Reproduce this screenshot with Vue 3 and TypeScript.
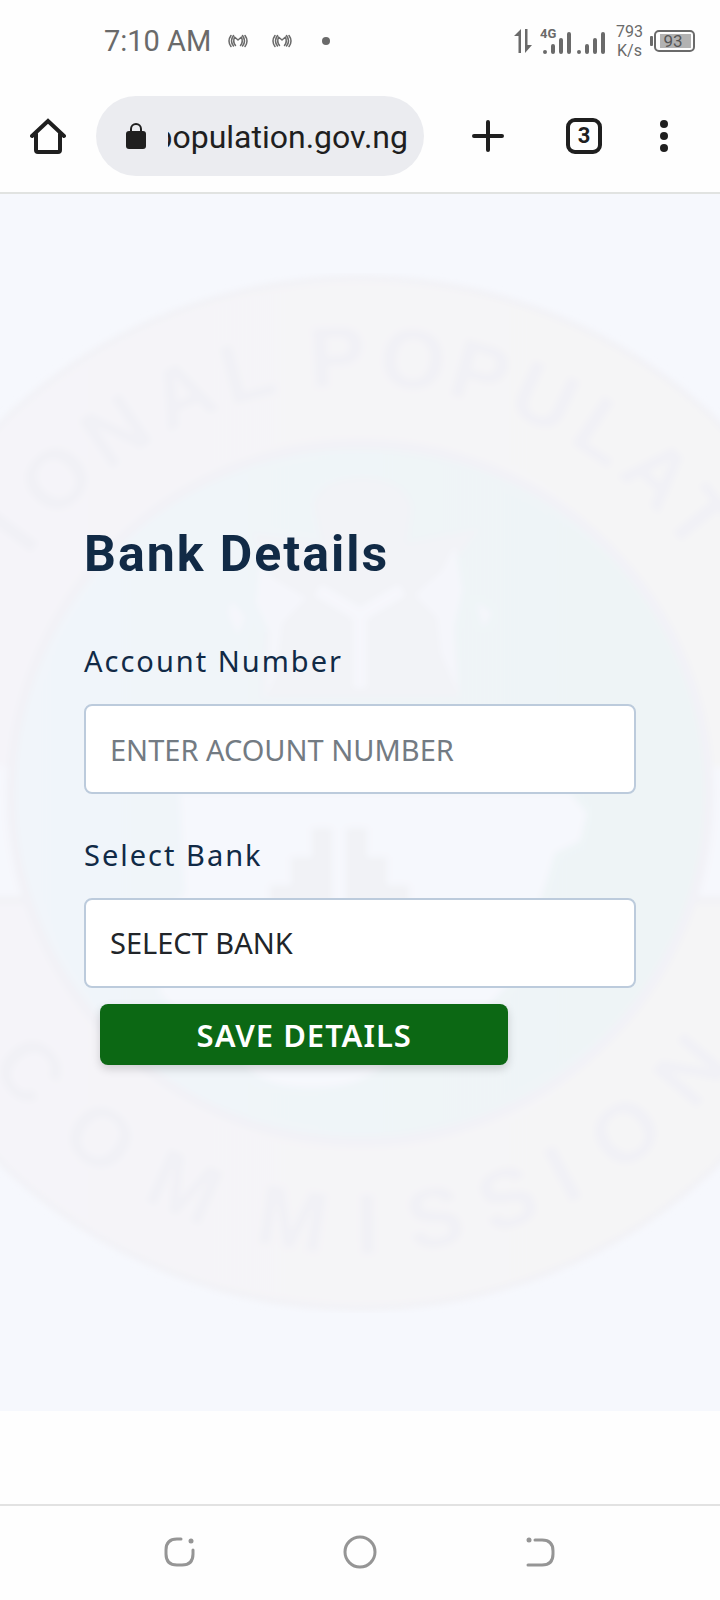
<script setup lang="ts">
import { ref } from 'vue'

interface SealLetter {
  char: string
  angle: number
}

const address = ref('population.gov.ng')
const accountNumber = ref('')
const bank = ref('')

const upperLetters: SealLetter[] = [
  { char: 'I', angle: -53 },
  { char: 'O', angle: -44 },
  { char: 'N', angle: -34 },
  { char: 'A', angle: -24 },
  { char: 'L', angle: -15 },
  { char: 'P', angle: -3 },
  { char: 'O', angle: 7 },
  { char: 'P', angle: 16 },
  { char: 'U', angle: 25 },
  { char: 'L', angle: 34 },
  { char: 'A', angle: 43 },
  { char: 'T', angle: 51 },
]

const lowerLetters: SealLetter[] = [
  { char: 'C', angle: 50 },
  { char: 'O', angle: 37 },
  { char: 'M', angle: 24 },
  { char: 'M', angle: 9 },
  { char: 'I', angle: -1 },
  { char: 'S', angle: -10 },
  { char: 'S', angle: -20 },
  { char: 'I', angle: -28 },
  { char: 'O', angle: -38 },
  { char: 'N', angle: -50 },
]
</script>

<template>
  <div class="phone">
    <header class="status">
      <div class="status-left">
        <span class="clock">7:10 AM</span>
        <svg v-for="n in 2" :key="n" class="cast" viewBox="0 0 20 14" aria-hidden="true">
          <g fill="none" stroke="#6a6a6a" stroke-width="1.500" stroke-linecap="round" stroke-linejoin="round">
            <path d="M3 1.500Q-1 7 3 12.500M5.500 1.500Q1.500 7 5.500 12M14.500 1.500Q18.500 7 14.500 12M17 1.500Q21 7 17 12.500" />
            <path d="M7.500 11.500Q4.500 8 6.500 3L10 6L13.500 3Q15.500 8 12.500 11.500" />
          </g>
        </svg>
        <span class="dot"></span>
      </div>
      <div class="status-right">
        <svg class="arrows" viewBox="0 0 18 24" aria-hidden="true">
          <path d="M7 0V24H4.500V7H0ZM11 0V24L18 16H13.500V0Z" fill="#6a6a6a" />
        </svg>
        <svg class="signal" viewBox="0 0 66 28" aria-hidden="true">
          <text x="0" y="11" class="network">4G</text>
          <g stroke="#6a6a6a" stroke-width="4" stroke-linecap="round">
            <path d="M5 25V25.100M13 19V25M21 13V25M29 7V25M39 25V25.100M47 19V25M55 13V25M63 7V25" />
          </g>
        </svg>
        <span class="speed">793<br />K/s</span>
        <svg class="battery" viewBox="0 0 46 22" aria-hidden="true">
          <rect x="0" y="6" width="3" height="10" rx="1" fill="#6a6a6a" />
          <rect x="5" y="1" width="39" height="20" rx="4" fill="none" stroke="#6a6a6a" stroke-width="2" />
          <rect x="10" y="4" width="31" height="14" fill="#b2b2b2" />
          <text x="23" y="17" class="charge">93</text>
        </svg>
      </div>
    </header>

    <div class="toolbar">
      <button class="tool home" type="button" aria-label="Home">
        <svg width="36" height="36" viewBox="0 0 36 36" fill="none" stroke="#1f1f1f" stroke-width="4" stroke-linecap="round" stroke-linejoin="round">
          <path d="M2 18L18 3L34 18" stroke-linejoin="miter" />
          <path d="M6 16V32Q6 34 8 34H28Q30 34 30 32V16" />
        </svg>
      </button>
      <div class="omnibox">
        <svg width="20" height="26" viewBox="0 0 20 26" aria-hidden="true">
          <path d="M5 10V6A5 5 0 0 1 15 6V10" fill="none" stroke="#1f1f1f" stroke-width="2" />
          <rect x="0" y="8" width="20" height="18" rx="3" fill="#1f1f1f" />
        </svg>
        <input v-model="address" class="address" type="text" aria-label="Address" />
      </div>
      <button class="tool add" type="button" aria-label="New tab">
        <svg width="32" height="32" viewBox="0 0 32 32" stroke="#1f1f1f" stroke-width="4" stroke-linecap="round">
          <path d="M2 16H30M16 2V30" />
        </svg>
      </button>
      <button class="tool tabs" type="button" aria-label="Tabs"><span class="count">3</span></button>
      <button class="tool more" type="button" aria-label="More">
        <svg width="8" height="32" viewBox="0 0 8 32" fill="#1f1f1f">
          <circle cx="4" cy="4" r="4" />
          <circle cx="4" cy="16" r="4" />
          <circle cx="4" cy="28" r="4" />
        </svg>
      </button>
    </div>

    <main class="page">
      <svg class="seal" viewBox="0 0 1040 1040" aria-hidden="true">
        <defs>
          <linearGradient id="band" x1="0" x2="1" y1="0" y2="0">
            <stop offset="0.150" stop-color="#f5f4f9" />
            <stop offset="0.850" stop-color="#f5f5f6" />
          </linearGradient>
          <linearGradient id="core" x1="0" x2="1" y1="0" y2="0">
            <stop offset="0" stop-color="#f1f5fa" />
            <stop offset="1" stop-color="#eef4f6" />
          </linearGradient>
          <filter id="soft"><feGaussianBlur stdDeviation="3" /></filter>
        </defs>
        <g filter="url(#soft)">
          <circle cx="520" cy="520" r="515" fill="url(#band)" stroke="#f2f2f6" stroke-width="6" />
          <path d="M0 494H1040V624H0Z" fill="#f6f8fd" />
          <path d="M20 627H1020" stroke="#f2f2f6" stroke-width="8" />
          <circle cx="520" cy="520" r="349" fill="url(#core)" stroke="#f2f2f7" stroke-width="10" />
          <g class="letters">
            <text v-for="(item, i) in upperLetters" :key="'u' + i" x="520" y="112" :transform="`rotate(${item.angle} 520 520)`">{{ item.char }}</text>
            <text v-for="(item, i) in lowerLetters" :key="'l' + i" x="520" y="980" :transform="`rotate(${item.angle} 520 520)`">{{ item.char }}</text>
          </g>
          <path d="M474 232Q480 205 522 205Q564 205 572 235L567 270L640 255L610 295L620 425H420L432 300L412 260L482 270Z" fill="#f2f3f7" />
          <path d="M478 317L520 342L562 317M520 342V415" fill="none" stroke="#f6f7fc" stroke-width="13" />
          <path d="M420 290L432 305L466 325L442 350L436 400L426 424L430 360L416 330ZM615 272L602 298L575 322L597 344L601 380L614 410L618 422L614 355L622 317ZM392 328L405 344L398 362L388 340ZM637 330L652 340L643 354Z" fill="#f5f6fb" />
          <path d="M340 520H730L747 540L740 568L715 580L706 610L697 635L680 700L645 735L600 760L545 790Q518 818 460 814Q415 811 402 786L355 758L320 720L316 650L345 620Z" fill="#f6f8fd" />
          <path d="M472 555H492V642H430V612H451V584H472ZM506 555H527V584H547V612H569V642H506Z" fill="#f1f2f6" />
        </g>
      </svg>

      <form class="form" @submit.prevent>
        <h1>Bank Details</h1>
        <div class="field">
          <label for="account">Account Number</label>
          <input id="account" v-model="accountNumber" class="control" type="text" inputmode="numeric" placeholder="ENTER ACOUNT NUMBER" />
        </div>
        <div class="field">
          <label for="bank">Select Bank</label>
          <select id="bank" v-model="bank" class="control">
            <option value="">SELECT BANK</option>
          </select>
        </div>
        <button class="save" type="submit">SAVE DETAILS</button>
      </form>
    </main>

    <nav class="system">
      <button type="button" aria-label="Recent apps">
        <svg width="36" height="36" viewBox="0 0 36 36" fill="none" stroke="#959595" stroke-width="3" stroke-linecap="round">
          <path d="M19 5H15Q4 5 4 16V20Q4 31 15 31H20Q31 31 31 20V16" />
          <circle cx="29" cy="7" r="2.500" fill="#959595" stroke="none" />
        </svg>
      </button>
      <button type="button" aria-label="Home screen">
        <svg width="36" height="36" viewBox="0 0 36 36" fill="none" stroke="#959595" stroke-width="3">
          <circle cx="18" cy="18" r="15" />
        </svg>
      </button>
      <button type="button" aria-label="Back">
        <svg width="36" height="36" viewBox="0 0 36 36" fill="none" stroke="#959595" stroke-width="3" stroke-linecap="round">
          <path d="M13 6H20Q31 6 31 17V20Q31 31 20 31H6" />
          <circle cx="7" cy="6" r="2.500" fill="#959595" stroke="none" />
        </svg>
      </button>
    </nav>
  </div>
</template>

<style>
body {
  margin: 0;
  background: #fefefe;
}
</style>

<style scoped>
.phone {
  display: flex;
  flex-direction: column;
  min-height: 100vh;
  background: #fefefe;
  font-family: Roboto, "Liberation Sans", sans-serif;
}

button {
  padding: 0;
  border: 0;
  background: none;
  font: inherit;
  cursor: pointer;
}

.status {
  display: flex;
  align-items: center;
  justify-content: space-between;
  box-sizing: border-box;
  height: 80px;
  padding: 1px 24px 0 104px;
  color: #6a6a6a;
}

.status-left,
.status-right {
  display: flex;
  align-items: center;
}

.clock {
  margin-right: 17px;
  font-size: 29px;
  line-height: 32px;
}

.cast {
  width: 20px;
  height: 14px;
  margin-right: 24px;
}

.dot {
  width: 8px;
  height: 8px;
  margin-left: 6px;
  border-radius: 50%;
  background: #6a6a6a;
}

.arrows {
  width: 18px;
  height: 24px;
  margin-right: 8px;
}

.signal {
  width: 66px;
  height: 28px;
  margin-right: 10px;
}

.network {
  fill: #6a6a6a;
  font-size: 13px;
  font-weight: 700;
}

.speed {
  margin-right: 7px;
  font-size: 16px;
  line-height: 19px;
  text-align: center;
}

.battery {
  width: 46px;
  height: 22px;
}

.charge {
  fill: #555555;
  font-size: 17px;
  text-anchor: middle;
}

.toolbar {
  display: flex;
  align-items: center;
  height: 112px;
  padding-right: 8px;
  border-bottom: 2px solid #e1e3e1;
}

.tool {
  display: flex;
  align-items: center;
  justify-content: center;
  height: 96px;
}

.home,
.more {
  width: 96px;
}

.add {
  width: 128px;
}

.tabs {
  width: 64px;
}

.count {
  box-sizing: border-box;
  width: 36px;
  height: 36px;
  border: 4px solid #1f1f1f;
  border-radius: 9px;
  color: #1f1f1f;
  font-size: 22px;
  line-height: 28px;
  font-weight: 700;
}

.omnibox {
  display: flex;
  flex: 1;
  align-items: center;
  gap: 22px;
  min-width: 0;
  height: 80px;
  padding: 0 16px 0 30px;
  box-sizing: border-box;
  border-radius: 40px;
  background: #ebecf0;
}

.omnibox svg {
  flex: none;
}

.address {
  flex: 1;
  min-width: 0;
  padding: 2px 0 0;
  border: 0;
  outline: 0;
  background: none;
  color: #1f1f1f;
  font-family: inherit;
  font-size: 32px;
  line-height: 44px;
  direction: rtl;
}

.page {
  position: relative;
  overflow: hidden;
  margin-bottom: 93px;
  padding: 330px 84px 346px;
  background: #f6f8fd;
}

.seal {
  position: absolute;
  top: calc(50% - 10px);
  left: 50%;
  width: 1040px;
  height: 1040px;
  transform: translate(-50%, -50%);
}

.letters {
  fill: #f1f1f6;
  font-family: "Liberation Sans", Arial, sans-serif;
  font-size: 84px;
  font-weight: 700;
  text-anchor: middle;
}

.form {
  position: relative;
}

h1 {
  margin: 0 0 53px;
  color: #112a46;
  font-size: 50px;
  line-height: 60px;
  font-weight: 700;
  letter-spacing: 2px;
}

.field + .field {
  margin-top: 37px;
}

label {
  display: block;
  margin-bottom: 19px;
  color: #112a46;
  font-family: "Noto Sans", "Open Sans", sans-serif;
  font-size: 29px;
  line-height: 48px;
  letter-spacing: 2px;
}

.control {
  display: block;
  box-sizing: border-box;
  width: 100%;
  height: 90px;
  padding: 0 24px;
  border: 2px solid #bccbdc;
  border-radius: 8px;
  outline: 0;
  appearance: none;
  background: #ffffff;
  color: #212529;
  font-family: "Noto Sans", "Open Sans", sans-serif;
  font-size: 29px;
  line-height: 48px;
}

.control::placeholder {
  color: #737b83;
  opacity: 1;
}

.save {
  display: block;
  width: 74%;
  height: 61px;
  margin: 16px 0 0 16px;
  border-radius: 8px;
  background: #0c6814;
  box-shadow: 0 4px 10px rgba(0, 0, 0, 0.16);
  color: #ffffff;
  font-family: "Noto Sans", "Open Sans", sans-serif;
  font-size: 31px;
  line-height: 60px;
  font-weight: 600;
  letter-spacing: 1px;
}

.system {
  display: flex;
  justify-content: space-between;
  flex: 1;
  min-height: 90px;
  padding: 0 90px 2px;
  border-top: 2px solid #e2e2e2;
}

.system button {
  display: flex;
  flex: 1;
  align-items: center;
  justify-content: center;
}

.system svg {
  display: block;
}
</style>
